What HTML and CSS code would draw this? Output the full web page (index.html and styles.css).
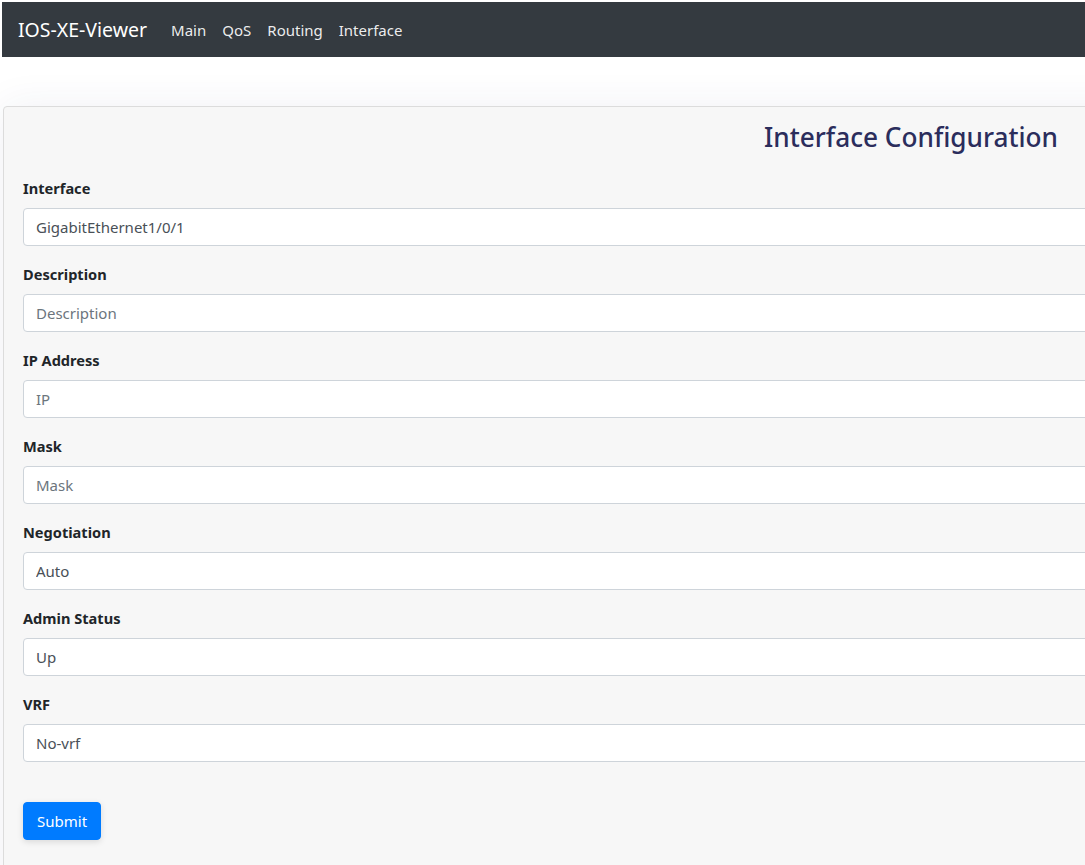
FILE: index.html
```html
<!DOCTYPE html>
<html>
<head>
<meta charset="utf-8">
<title>IOS-XE-Viewer</title>
<link rel="stylesheet" href="styles.css">
</head>
<body>
<nav class="navbar">
  <a class="brand" href="#">IOS-XE-Viewer</a>
  <ul class="nav">
    <li><a class="nav-link" href="#">Main</a></li>
    <li><a class="nav-link" href="#">QoS</a></li>
    <li><a class="nav-link" href="#">Routing</a></li>
    <li><a class="nav-link" href="#">Interface</a></li>
  </ul>
</nav>
<main class="page">
  <section class="card">
    <h3 class="title">Interface Configuration</h3>
    <form class="form">
      <div class="group">
        <label class="label">Interface</label>
        <input class="input" type="text" value="GigabitEthernet1/0/1">
      </div>
      <div class="group">
        <label class="label">Description</label>
        <input class="input" type="text" placeholder="Description">
      </div>
      <div class="group">
        <label class="label">IP Address</label>
        <input class="input" type="text" placeholder="IP">
      </div>
      <div class="group">
        <label class="label">Mask</label>
        <input class="input" type="text" placeholder="Mask">
      </div>
      <div class="group">
        <label class="label">Negotiation</label>
        <input class="input" type="text" value="Auto">
      </div>
      <div class="group">
        <label class="label">Admin Status</label>
        <input class="input" type="text" value="Up">
      </div>
      <div class="group">
        <label class="label">VRF</label>
        <input class="input" type="text" value="No-vrf">
      </div>
      <button class="btn" type="button">Submit</button>
    </form>
  </section>
</main>
</body>
</html>
```
FILE: styles.css
```css
html, body {
  margin: 0;
  padding: 0;
  overflow: hidden;
  background: #fff;
}
body {
  padding: 2px 0 0 2px;
  font-family: "Noto Sans", "Open Sans", sans-serif;
  font-size: 15px;
  line-height: 24px;
  color: #212529;
}
.navbar {
  display: flex;
  align-items: center;
  height: 55px;
  padding: 0 16px;
  background: #343a40;
}
.brand {
  font-size: 19.5px;
  line-height: 30px;
  color: #fff;
  text-decoration: none;
  margin-right: 16px;
}
.nav {
  display: flex;
  list-style: none;
  margin: 0;
  padding: 0;
}
.nav-link {
  display: block;
  padding: 8px;
  font-size: 15px;
  color: rgba(255,255,255,.92);
  text-decoration: none;
}
.page {
  padding-top: 49px;
  padding-left: 1px;
}
.card {
  width: 1300px;
  height: 800px;
  box-sizing: border-box;
  background: #f7f7f7;
  border: 1px solid #dcdcdc;
  border-radius: 4px;
  box-shadow: 0 0 40px rgba(40, 60, 120, .07);
  padding: 13px 0 0 19px;
}
.title {
  margin: 0 0 22px 0;
  padding-left: 741px;
  font-size: 26.2px;
  font-weight: 500;
  line-height: 34px;
  color: #2b2d5c;
}
.group {
  margin-bottom: 16px;
}
.label {
  display: block;
  font-weight: 700;
  font-size: 14.6px;
  line-height: 24px;
  margin-bottom: 8px;
}
.input {
  display: block;
  width: 1200px;
  height: 38px;
  box-sizing: border-box;
  padding: 6px 12px;
  font-family: inherit;
  font-size: 15px;
  color: #495057;
  background: #fff;
  border: 1px solid #ced4da;
  border-radius: 4px;
}
.input::placeholder {
  color: #6c757d;
}
.btn {
  display: block;
  margin-top: 40px;
  height: 38px;
  padding: 0 13px;
  font-family: inherit;
  font-size: 15px;
  color: #fff;
  background: #007bff;
  border: 1px solid #007bff;
  border-radius: 4px;
  box-shadow: 0 2px 6px rgba(0,0,0,.12);
}
```
